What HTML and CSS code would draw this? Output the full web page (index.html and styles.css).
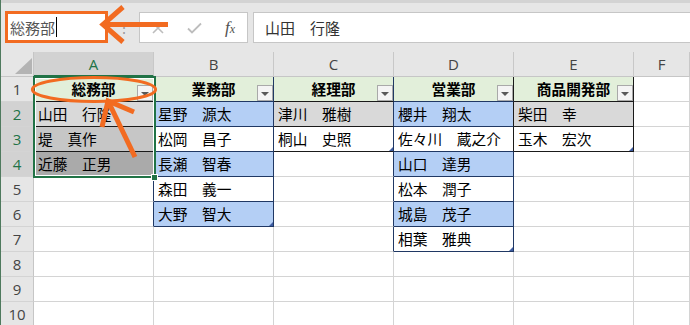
FILE: index.html
```html
<!DOCTYPE html>
<html lang="ja">
<head>
<meta charset="utf-8">
<title>名前ボックス</title>
<link rel="stylesheet" href="styles.css">
</head>
<body>
<div class="app">
  <div class="fbar">
    <div class="namebox"><span>総務部</span><span class="caret"></span></div>
    <div class="grip">⋮</div>
    <div class="fxbox">
      <svg class="ic-x" width="12" height="12" viewBox="0 0 12 12"><path d="M1 1 L11 11 M11 1 L1 11" stroke="#bdbdbd" stroke-width="1.6" fill="none"/></svg>
      <svg class="ic-ok" width="15" height="12" viewBox="0 0 15 12"><path d="M1 6.5 L5 10.5 L14 1.5" stroke="#bdbdbd" stroke-width="1.8" fill="none"/></svg>
      <span class="ic-fx">f<span class="fx-x">x</span></span>
    </div>
    <div class="formula">山田　行隆</div>
  </div>

  <div class="sheet">
    <div class="corner"><svg width="32" height="24" viewBox="0 0 32 24"><polygon points="14,22 31,22 31,6" fill="#b4b4b4"/></svg></div>
    <div class="ch sel">A</div>
    <div class="ch">B</div>
    <div class="ch">C</div>
    <div class="ch">D</div>
    <div class="ch">E</div>
    <div class="ch">F</div>

    <div class="rh">1</div>
    <div class="c hdr bk rn">総務部<span class="dd"></span></div>
    <div class="c hdr bn rn">業務部<span class="dd"></span></div>
    <div class="c hdr bk rn">経理部<span class="dd"></span></div>
    <div class="c hdr bn rk">営業部<span class="dd"></span></div>
    <div class="c hdr bk rk">商品開発部<span class="dd"></span></div>
    <div class="c"></div>

    <div class="rh sel">2</div>
    <div class="c gy bk rn">山田　行隆</div>
    <div class="c bl bn rn">星野　源太</div>
    <div class="c gy bk rn">津川　雅樹</div>
    <div class="c bl bn rk">櫻井　翔太</div>
    <div class="c gy bk rk">柴田　幸</div>
    <div class="c"></div>

    <div class="rh sel">3</div>
    <div class="c a3 bk rn">堤　真作</div>
    <div class="c bn rn">松岡　昌子</div>
    <div class="c bk rn rz">桐山　史照</div>
    <div class="c bn rk">佐々川　蔵之介</div>
    <div class="c bk rk rz">玉木　宏次</div>
    <div class="c"></div>

    <div class="rh sel">4</div>
    <div class="c a4 bk rn">近藤　正男</div>
    <div class="c bl bn rn">長瀬　智春</div>
    <div class="c rn"></div>
    <div class="c bl bn rn">山口　達男</div>
    <div class="c"></div>
    <div class="c"></div>

    <div class="rh">5</div>
    <div class="c rn"></div>
    <div class="c bn rn">森田　義一</div>
    <div class="c rn"></div>
    <div class="c bn rn">松本　潤子</div>
    <div class="c"></div>
    <div class="c"></div>

    <div class="rh">6</div>
    <div class="c rn"></div>
    <div class="c bl bn rn rz">大野　智大</div>
    <div class="c rn"></div>
    <div class="c bl bn rn">城島　茂子</div>
    <div class="c"></div>
    <div class="c"></div>

    <div class="rh">7</div>
    <div class="c"></div>
    <div class="c"></div>
    <div class="c rn"></div>
    <div class="c bn rn rz">相葉　雅典</div>
    <div class="c"></div>
    <div class="c"></div>

    <div class="rh">8</div>
    <div class="c"></div><div class="c"></div><div class="c"></div><div class="c"></div><div class="c"></div><div class="c"></div>
    <div class="rh">9</div>
    <div class="c"></div><div class="c"></div><div class="c"></div><div class="c"></div><div class="c"></div><div class="c"></div>
    <div class="rh">10</div>
    <div class="c"></div><div class="c"></div><div class="c"></div><div class="c"></div><div class="c"></div><div class="c"></div>

    <div class="selbox"></div>
    <div class="handle"></div>
  </div>

  <svg class="annot" width="690" height="325" viewBox="0 0 690 325">
    <g fill="none" stroke="#f26b21" stroke-width="5" stroke-linejoin="miter">
      <ellipse cx="94" cy="89.5" rx="61.5" ry="12" stroke-width="3.2"/>
      <path d="M168 24.5 H105"/>
      <path d="M123 7 L103 24.5 L123 42"/>
      <path d="M135 157 L109 103"/>
      <path d="M102 127 L108 101 L134 112"/>
    </g>
  </svg>
</div>
</body>
</html>
```

FILE: styles.css
```css
* { box-sizing: border-box; }
html, body { margin: 0; padding: 0; }
body {
  width: 690px;
  height: 325px;
  overflow: hidden;
  background: #ffffff;
  font-family: "Noto Sans CJK JP", "Noto Sans", sans-serif;
}
.app {
  position: relative;
  height: 325px;
  border-left: 1px solid #4f7a5e;
  overflow: hidden;
}

/* formula bar */
.fbar {
  height: 52px;
  background: #e6e6e6;
  border-top: 3px solid #d3d3d3;
  display: flex;
  align-items: flex-start;
  padding-top: 8px;
}
.namebox {
  margin-left: 4px;
  width: 103px;
  height: 32px;
  border: 3px solid #f26b21;
  background: #ffffff;
  display: flex;
  align-items: center;
  padding-left: 2px;
  font-size: 15px;
  color: #555555;
}
.caret {
  width: 1px;
  height: 20px;
  background: #000000;
  margin-left: 1px;
}
.grip {
  width: 31px;
  text-align: center;
  color: #9a9a9a;
  font-size: 14px;
  line-height: 32px;
}
.fxbox {
  width: 109px;
  height: 31px;
  margin-top: 1px;
  border: 1px solid #c6c6c6;
  background: #ffffff;
  display: flex;
  align-items: center;
  padding-left: 12px;
}
.ic-ok { margin-left: 23px; }
.ic-fx {
  margin-left: 23px;
  font-family: "Liberation Serif", serif;
  font-style: italic;
  font-size: 17px;
  color: #505050;
  line-height: 1;
}
.fx-x { font-size: 12px; }
.formula {
  flex: 1;
  height: 31px;
  margin-top: 1px;
  margin-left: 5px;
  border: 1px solid #c6c6c6;
  border-right: none;
  background: #ffffff;
  padding-left: 11px;
  font-size: 15px;
  line-height: 29px;
  color: #333333;
}

/* sheet grid */
.sheet {
  position: relative;
  display: grid;
  grid-template-columns: 33px repeat(5, 120px) 1fr;
  grid-auto-rows: 25px;
}
.corner, .ch, .rh, .c {
  border-right: 1px solid #d4d4d4;
  border-bottom: 1px solid #d4d4d4;
}
.corner {
  background: #e6e6e6;
  border-right-color: #c6c6c6;
  border-bottom-color: #c6c6c6;
}
.corner svg { display: block; }
.ch {
  background: #e6e6e6;
  border-right-color: #c8c8c8;
  border-bottom-color: #c6c6c6;
  font-family: "Open Sans", sans-serif;
  font-size: 15px;
  color: #444444;
  text-align: center;
  line-height: 24px;
}
.ch.sel {
  background: #d2d2d2;
  color: #217346;
  border-bottom: 2px solid #217346;
}
.rh {
  background: #e6e6e6;
  border-right-color: #c6c6c6;
  font-family: "Open Sans", sans-serif;
  font-size: 15px;
  color: #444444;
  text-align: center;
  line-height: 24px;
}
.rh.sel {
  background: #d2d2d2;
  color: #217346;
}
.c {
  position: relative;
  font-size: 14.7px;
  line-height: 24px;
  padding-left: 4px;
  white-space: nowrap;
  color: #000000;
}
.hdr {
  background: #e2efda;
  font-weight: bold;
  text-align: center;
  padding-left: 0;
}
.dd {
  position: absolute;
  right: 0;
  bottom: 0;
  width: 16px;
  height: 16px;
  background: #f4f4f4;
  border: 1px solid #a9a9a9;
}
.dd::after {
  content: "";
  position: absolute;
  left: 3px;
  top: 6px;
  border-left: 4px solid transparent;
  border-right: 4px solid transparent;
  border-top: 4px solid #595959;
}

/* fills */
.gy { background: #d9d9d9; }
.bl { background: #b4cff5; }
.a3 { background: #c6c6c6; }
.a4 { background: #aaaaaa; }

/* table borders */
.rn { border-right-color: #203864; }
.rk { border-right-color: #1a1a1a; }
.bn { border-bottom-color: #203864; }
.bk { border-bottom-color: #1a1a1a; }

.rz::after {
  content: "";
  position: absolute;
  right: 0;
  bottom: 0;
  border-left: 4px solid transparent;
  border-bottom: 4px solid #3e5da3;
}

/* selection */
.selbox {
  position: absolute;
  left: 32px;
  top: 24px;
  width: 123px;
  height: 102px;
  border: 2px solid #217346;
  box-shadow: inset 0 0 0 1px #ffffff;
  pointer-events: none;
}
.handle {
  position: absolute;
  left: 150px;
  top: 122px;
  width: 7px;
  height: 7px;
  background: #217346;
  border: 1px solid #ffffff;
}

/* annotations */
.annot {
  position: absolute;
  left: -1px;
  top: 0;
  pointer-events: none;
}
```
